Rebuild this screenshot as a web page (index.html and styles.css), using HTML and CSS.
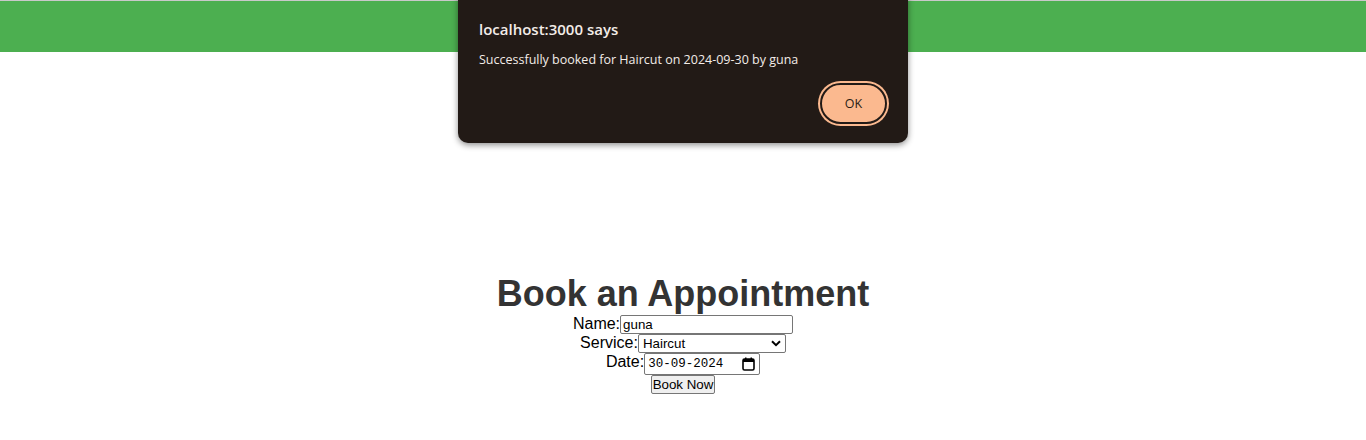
FILE: index.html
```html
<!DOCTYPE html>
<html>
<head>
<meta charset="utf-8">
<title>Book an Appointment</title>
<link rel="stylesheet" href="styles.css">
</head>
<body>
<header class="topbar"></header>
<main class="page">
  <h1 class="title">Book an Appointment</h1>
  <form class="booking">
    <div class="row"><label class="lbl">Name:</label><input class="field name" type="text" value="guna"></div>
    <div class="row"><label class="lbl">Service:</label><span class="field select"><span class="sel-text">Haircut</span><svg class="chev" width="10" height="7" viewBox="0 0 10 7"><path d="M1 1.2 L5 5.2 L9 1.2" fill="none" stroke="#000" stroke-width="2"/></svg></span></div>
    <div class="row"><label class="lbl">Date:</label><span class="field date"><span class="date-text">30-09-2024</span><svg class="cal" width="13" height="14" viewBox="0 0 13 14"><rect x="1" y="2" width="11" height="11" rx="1.5" fill="none" stroke="#000" stroke-width="1.6"/><rect x="1" y="2" width="11" height="3" fill="#000"/><rect x="3" y="0.5" width="1.5" height="2.5" fill="#000"/><rect x="8.5" y="0.5" width="1.5" height="2.5" fill="#000"/></svg></span></div>
    <div class="row"><button type="button" class="btn">Book Now</button></div>
  </form>
</main>
<div class="dialog">
  <div class="dlg-title">localhost:3000 says</div>
  <div class="dlg-msg">Successfully booked for Haircut on 2024-09-30 by guna</div>
  <div class="dlg-actions"><button type="button" class="ok">OK</button></div>
</div>
</body>
</html>
```
FILE: styles.css
```css
html, body { margin: 0; padding: 0; background: #fff; }
body { font-family: "Liberation Sans", Arial, sans-serif; position: relative; }
.topbar { height: 51px; background: #4caf50; border-top: 1px solid #c9c9c9; }
.page { text-align: center; padding-top: 221px; }
.title { margin: 0; font-size: 36px; font-weight: bold; color: #333; line-height: 42px; }
.booking { display: flex; flex-direction: column; align-items: center; }
.row { display: flex; align-items: flex-start; font-size: 16px; color: #000; }
.lbl { line-height: 18px; }
.field { box-sizing: border-box; border: 1px solid #767676; border-radius: 2px; background: #fff; font-family: "Liberation Sans", Arial, sans-serif; font-size: 13.33px; color: #000; margin: 0; }
.name { width: 173px; height: 19px; padding: 0 2px; }
.select { display: flex; align-items: center; justify-content: space-between; width: 148px; height: 19px; padding: 0 4px 0 4px; }
.date { display: flex; align-items: center; justify-content: space-between; width: 116px; height: 22px; padding: 0 4px 0 3px; margin-top: 0; }
.date-text { font-family: "Liberation Mono", monospace; font-size: 12.5px; letter-spacing: 0px; }
.cal { display: block; }
.chev { display: block; }
.btn { box-sizing: border-box; width: 64px; height: 19px; padding: 0; margin: 0; font-family: "Liberation Sans", Arial, sans-serif; font-size: 13.33px; background: #efefef; border: 1px solid #767676; border-radius: 2px; color: #000; }
.dialog { position: absolute; left: 458px; top: -10px; width: 450px; height: 153px; box-sizing: border-box; background: #221a16; border-radius: 10px; box-shadow: 0 2px 6px rgba(0,0,0,0.45); padding: 28px 20px 0 21px; font-family: "Open Sans", "Noto Sans", sans-serif; color: #f3ece8; }
.dlg-title { font-size: 15px; font-weight: 600; line-height: 22px; }
.dlg-msg { font-size: 12.5px; line-height: 18px; margin-top: 11px; }
.dlg-actions { display: flex; justify-content: flex-end; margin-top: 14px; padding-right: 1px; }
.ok { box-sizing: border-box; width: 67px; height: 41px; border: 2px solid #221a16; border-radius: 21px; background: #fbb98f; box-shadow: 0 0 0 2px #fbb98f; color: #2a1d14; font-family: "Open Sans", "Noto Sans", sans-serif; font-size: 12.5px; padding: 0; }
```
